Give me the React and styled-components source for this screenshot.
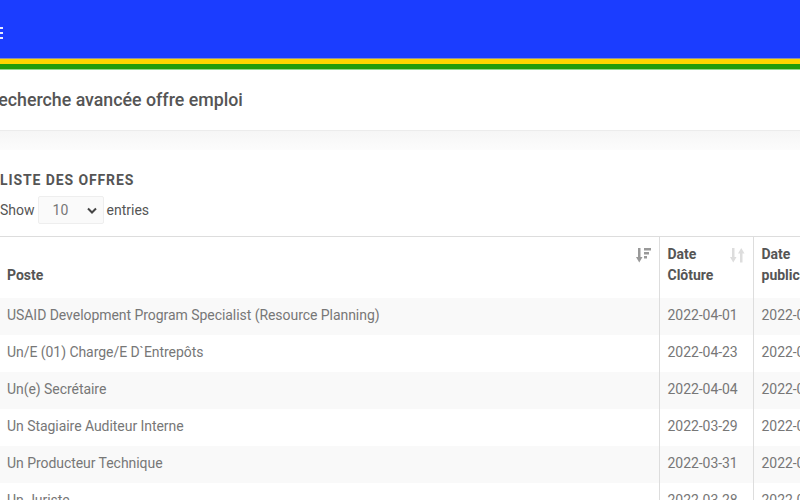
import React from 'react';
import styled, { createGlobalStyle } from 'styled-components';

const GlobalStyle = createGlobalStyle`
  html, body {
    margin: 0;
    padding: 0;
    overflow: hidden;
    background: #fff;
  }
  body {
    font-family: Roboto, "Liberation Sans", sans-serif;
    width: 800px;
    height: 500px;
  }
`;

const Page = styled.div`
  margin-left: -15px;
  width: 1100px;
`;

const TopBar = styled.header`
  background-color: #1b3dff;
  height: 58px;
  display: flex;
  align-items: center;
  padding-left: 5px;
`;

const Burger = styled.div`
  display: flex;
  flex-direction: column;
  gap: 3px;
  margin-top: 7px;
  span {
    display: block;
    width: 13px;
    height: 2px;
    background: #e8ecff;
  }
`;

const Stripe = styled.div`
  height: ${(p) => p.$h}px;
  background: ${(p) => p.$c};
`;

const TitleBar = styled.div`
  height: 60px;
  display: flex;
  align-items: center;
  padding-left: 2px;
  border-bottom: 1px solid #ececec;
`;

const Title = styled.h1`
  margin: 0;
  font: 500 17.8px/1 Roboto, "Liberation Sans", sans-serif;
  color: #555;
`;

const Fade = styled.div`
  height: 19px;
  background: linear-gradient(#f6f6f6, #fcfcfc);
`;

const Card = styled.section`
  padding: 21px 0 0 15px;
`;

const CardTitle = styled.h2`
  margin: 0;
  font: 700 14px/18px Roboto, "Liberation Sans", sans-serif;
  letter-spacing: 0.9px;
  color: #555;
`;

const LengthRow = styled.div`
  display: flex;
  align-items: center;
  gap: 3px;
  margin-top: 7px;
  font: 400 14px Roboto, "Liberation Sans", sans-serif;
  color: #555;
`;

const SelectBox = styled.div`
  width: 66px;
  height: 28px;
  box-sizing: border-box;
  background: #fafafa;
  border: 1px solid #eee;
  border-radius: 2px;
  display: flex;
  align-items: center;
  justify-content: space-between;
  padding: 0 6px 0 14px;
  color: #777;
`;

const Table = styled.table`
  margin-top: 12px;
  margin-left: -1px;
  border-collapse: collapse;
  table-layout: fixed;
  font: 400 14px/21px Roboto, "Liberation Sans", sans-serif;
  border-top: 1px solid #ddd;
`;

const Th = styled.th`
  position: relative;
  width: ${(p) => p.$w}px;
  height: 61px;
  box-sizing: border-box;
  padding: 6px 8px 12px;
  text-align: left;
  vertical-align: bottom;
  font-weight: 700;
  color: #555;
  border-left: ${(p) => (p.$first ? 'none' : '1px solid #ddd')};
`;

const SortIcon = styled.svg`
  position: absolute;
  top: 10px;
  right: 8px;
`;

const Tr = styled.tr`
  background: ${(p) => (p.$odd ? '#f9f9f9' : '#fff')};
`;

const Td = styled.td`
  height: 37px;
  box-sizing: border-box;
  padding: 7px 8px 8px;
  color: #777;
  white-space: nowrap;
  letter-spacing: -0.05px;
  border-left: ${(p) => (p.$first ? 'none' : '1px solid #ddd')};
`;

const SortDown = () => (
  <SortIcon width="15" height="17" viewBox="0 0 15 17" fill="#999">
    <rect x="2" y="1" width="2.5" height="11" />
    <polygon points="0,10 6.5,10 3.25,15.5" />
    <rect x="8" y="1" width="7" height="2.5" />
    <rect x="8" y="5" width="5" height="2.5" />
    <rect x="8" y="9" width="3" height="2.5" />
  </SortIcon>
);

const SortBoth = () => (
  <SortIcon width="15" height="17" viewBox="0 0 15 17" fill="#ddd">
    <rect x="2" y="1" width="2.5" height="11" />
    <polygon points="0,10 6.5,10 3.25,15.5" />
    <rect x="10" y="4.5" width="2.5" height="11" />
    <polygon points="8,6.5 14.5,6.5 11.25,1" />
  </SortIcon>
);

const rows = [
  ['USAID Development Program Specialist (Resource Planning)', '2022-04-01', '2022-03-18'],
  ['Un/E (01) Charge/E D`Entrepôts', '2022-04-23', '2022-03-18'],
  ['Un(e) Secrétaire', '2022-04-04', '2022-03-18'],
  ['Un Stagiaire Auditeur Interne', '2022-03-29', '2022-03-18'],
  ['Un Producteur Technique', '2022-03-31', '2022-03-18'],
  ['Un Juriste', '2022-03-28', '2022-03-18'],
];

const App = () => {
  return (
    <>
      <GlobalStyle />
      <Page>
        <TopBar>
          <Burger>
            <span />
            <span />
            <span />
          </Burger>
        </TopBar>
        <Stripe $h={1} $c="#8a8fb0" />
        <Stripe $h={5} $c="#ffd400" />
        <Stripe $h={5} $c="#229b0b" />
        <Stripe $h={1} $c="#93d68d" />
        <TitleBar>
          <Title>Recherche avancée offre emploi</Title>
        </TitleBar>
        <Fade />
        <Card>
          <CardTitle>LISTE DES OFFRES</CardTitle>
          <LengthRow>
            Show
            <SelectBox>
              10
              <svg width="10" height="7" viewBox="0 0 10 7">
                <path d="M1 1.5 L5 5.5 L9 1.5" stroke="#444" strokeWidth="2" fill="none" />
              </svg>
            </SelectBox>
            entries
          </LengthRow>
          <Table>
            <thead>
              <tr>
                <Th $w={660} $first>
                  Poste
                  <SortDown />
                </Th>
                <Th $w={94}>
                  Date
                  <br />
                  Clôture
                  <SortBoth />
                </Th>
                <Th $w={150}>
                  Date
                  <br />
                  publication
                  <SortBoth />
                </Th>
              </tr>
            </thead>
            <tbody>
              {rows.map((r, i) => (
                <Tr key={i} $odd={i % 2 === 0}>
                  <Td $first>{r[0]}</Td>
                  <Td>{r[1]}</Td>
                  <Td>{r[2]}</Td>
                </Tr>
              ))}
            </tbody>
          </Table>
        </Card>
      </Page>
    </>
  );
};

export default App;
